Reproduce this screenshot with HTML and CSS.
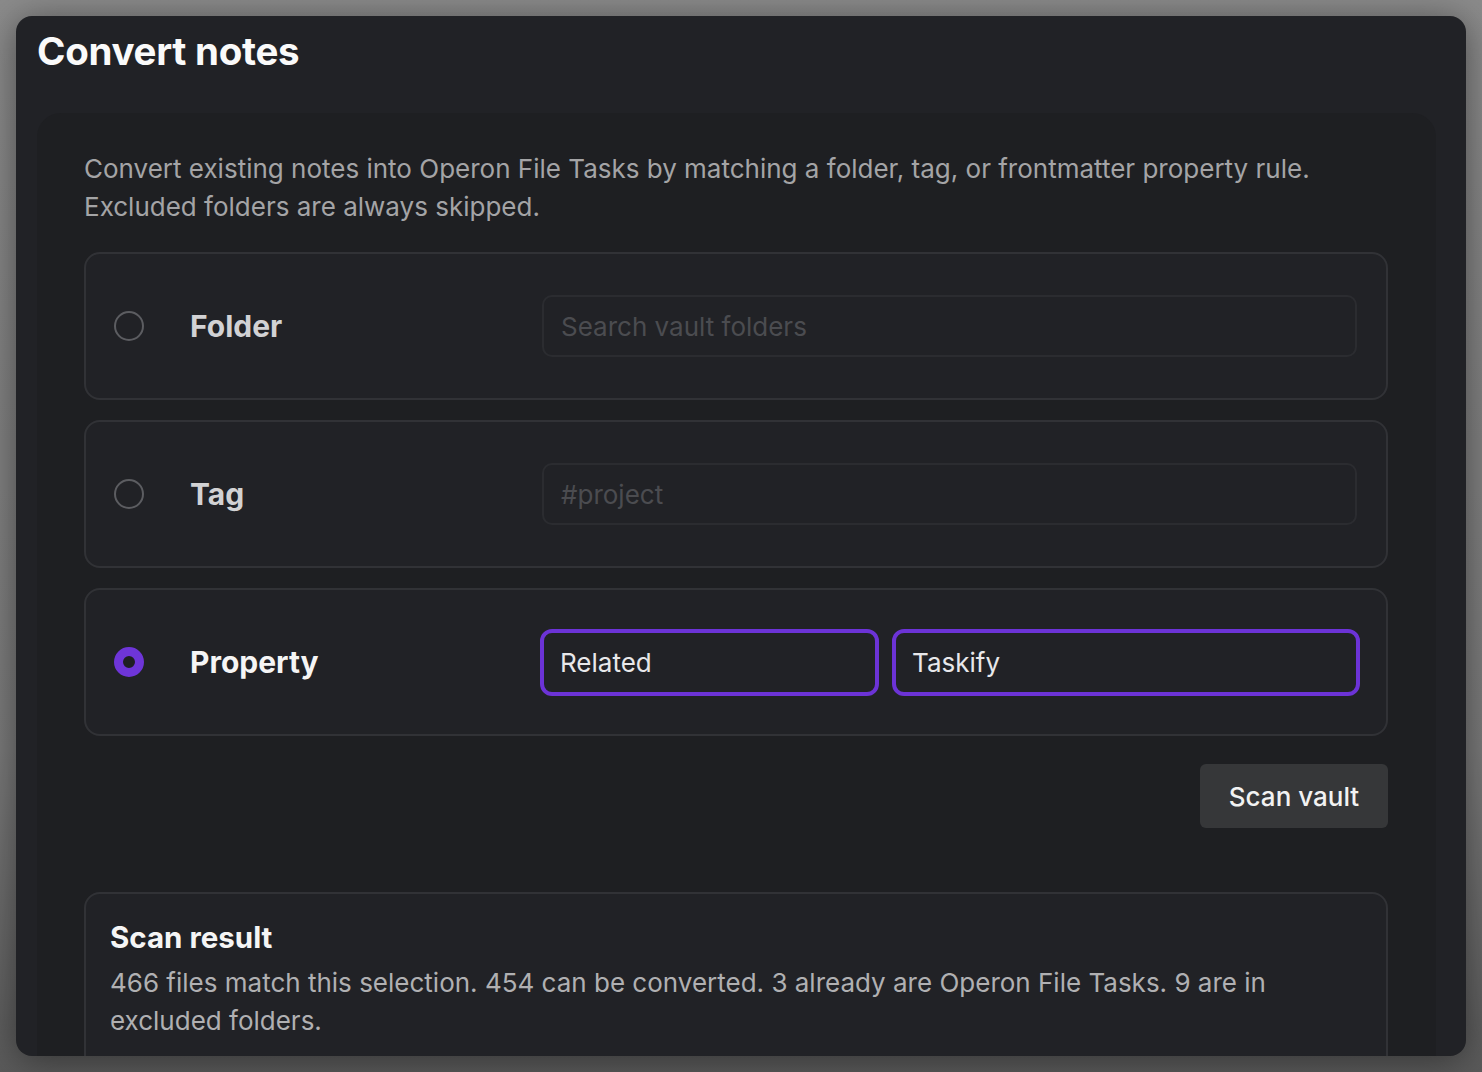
FILE: index.html
```html
<!DOCTYPE html>
<html>
<head>
  <meta charset="UTF-8">
  <title>Convert notes</title>
  <link rel="stylesheet" href="styles.css">
</head>
<body>
  <div class="modal">
    <h1 class="modal-title">Convert notes</h1>
    <div class="panel">
      <p class="intro">Convert existing notes into Operon File Tasks by matching a folder, tag, or frontmatter property rule. Excluded folders are always skipped.</p>

      <div class="rule">
        <span class="radio"></span>
        <span class="rule-label">Folder</span>
        <div class="rule-fields">
          <input class="field" type="text" placeholder="Search vault folders">
        </div>
      </div>

      <div class="rule">
        <span class="radio"></span>
        <span class="rule-label">Tag</span>
        <div class="rule-fields">
          <input class="field" type="text" placeholder="#project">
        </div>
      </div>

      <div class="rule active">
        <span class="radio checked"></span>
        <span class="rule-label">Property</span>
        <div class="rule-fields">
          <input class="field focus key" type="text" value="Related">
          <input class="field focus value" type="text" value="Taskify">
        </div>
      </div>

      <div class="actions">
        <button class="scan-btn">Scan vault</button>
      </div>

      <div class="result">
        <h2>Scan result</h2>
        <p>466 files match this selection. 454 can be converted. 3 already are Operon File Tasks. 9 are in excluded folders.</p>
      </div>
    </div>
  </div>
</body>
</html>
```

FILE: styles.css
```css
body { margin: 0; height: 1072px; overflow: hidden; font-family: Inter, "Noto Sans", sans-serif; background: linear-gradient(180deg, #8b8b8b 0%, #7a7a7a 70%, #5a5a5a 100%); }

.modal {
  margin: 16px;
  height: 1040px;
  box-sizing: border-box;
  background: #212226;
  border-radius: 16px;
  box-shadow: 0 4px 36px rgba(0, 0, 0, 0.45);
  padding: 0 30px 0 21px;
  overflow: hidden;
}

.modal-title {
  margin: 0;
  padding-top: 13px;
  height: 97px;
  box-sizing: border-box;
  font-size: 38.5px;
  line-height: 45px;
  font-weight: 700;
  color: #fafafa;
  letter-spacing: -0.3px;
}

.panel {
  background: #1e1f22;
  border-radius: 24px;
  padding: 37px 48px 40px 47px;
  min-height: 1000px;
}

.intro {
  margin: 0 0 26px;
  font-size: 26px;
  line-height: 38px;
  color: #a4a4a6;
}

/* rule cards */
.rule {
  display: flex;
  align-items: center;
  height: 148px;
  box-sizing: border-box;
  border: 2px solid #313236;
  border-radius: 16px;
  background: #212226;
  padding: 0 29px 0 28px;
  margin-bottom: 20px;
}

.radio {
  flex: 0 0 auto;
  width: 30px;
  height: 30px;
  box-sizing: border-box;
  border: 2px solid #5c5d61;
  border-radius: 50%;
}
.radio.checked {
  border: 9px solid #6e35d8;
  background: #1e1f22;
}

.rule-label {
  flex: 0 0 auto;
  width: 352px;
  margin-left: 46px;
  font-size: 30px;
  font-weight: 700;
  color: #d2d2d4;
}
.rule.active .rule-label { color: #f5f5f5; }

.rule-fields {
  flex: 1;
  min-width: 0;
  display: flex;
  gap: 13px;
}

.field {
  flex: 1 1 0;
  min-width: 0;
  width: 0;
  height: 62px;
  box-sizing: border-box;
  border: 2px solid #2b2c30;
  border-radius: 10px;
  background: #212226;
  padding: 0 17px;
  font-family: inherit;
  font-size: 26px;
  color: #e8e8ea;
  outline: none;
}
.field::placeholder { color: #4b4c50; }

.field.focus {
  height: 67px;
  border: 4px solid #6c33d6;
  border-radius: 12px;
  padding: 0 16px;
}
.field.key { flex: 0 0 339px; margin-left: -2px; }
.field.value { margin-right: -3px; }

/* actions */
.actions {
  display: flex;
  justify-content: flex-end;
  margin-top: 28px;
}
.scan-btn {
  width: 188px;
  height: 64px;
  border: none;
  border-radius: 6px;
  background: #363739;
  color: #f2f2f2;
  font-family: inherit;
  font-size: 26px;
  font-weight: 500;
  cursor: pointer;
}

/* result */
.result {
  margin-top: 64px;
  border: 2px solid #313236;
  border-radius: 16px;
  background: #212226;
  padding: 23px 24px 30px;
}
.result h2 {
  margin: 0 0 7px;
  font-size: 29.5px;
  line-height: 40px;
  font-weight: 700;
  color: #f5f5f5;
}
.result p {
  margin: 0;
  font-size: 26px;
  line-height: 38px;
  color: #b0b0b2;
}
```
